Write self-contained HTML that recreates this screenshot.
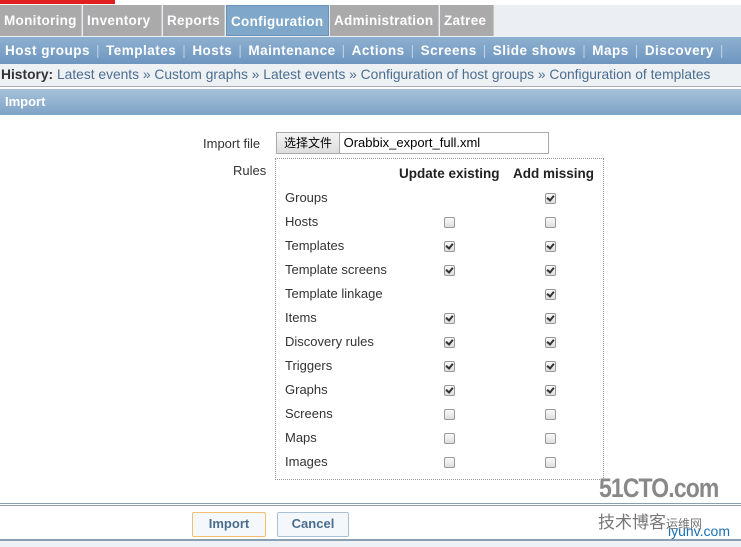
<!DOCTYPE html><html><head><style>
body{margin:0;width:741px;height:547px;background:#fff;font-family:"Liberation Sans",Arial,sans-serif;position:relative;overflow:hidden}
.a{position:absolute}
.tab{position:absolute;top:5px;height:31px;background:#aaa;border-right:1px solid #c4c4c4;color:#fff;font-weight:bold;font-size:13.5px;line-height:31px;padding-left:4px;box-sizing:border-box;white-space:nowrap;overflow:hidden;letter-spacing:0.3px}
.nav{font-weight:bold;color:#fff;font-size:13.5px;letter-spacing:0.5px}
.nav span{color:#bcd0e2;font-weight:normal;margin:0 6px}
.t{font-size:13px;color:#333;position:absolute}
.cb{position:absolute;width:9px;height:9px;border:1px solid #999;border-radius:2px;background:linear-gradient(#fafafa,#ddd)}
.cb.c::after{content:"";position:absolute;left:2px;top:0px;width:3px;height:5px;border:solid #333;border-width:0 2px 2px 0;transform:rotate(40deg)}
.btn{position:absolute;top:512px;height:23px;border:1px solid #aac0d4;border-radius:2px;background:#f5f8fb;color:#4a6d8f;font-weight:bold;font-size:13px;text-align:center;line-height:22px}
</style></head><body>
<div class="a" style="left:0;top:0;width:115px;height:4px;background:#e02020"></div>
<div class="a" style="left:0;top:5px;width:741px;height:32px;background:#ebeef2"></div>
<div class="tab" style="left:0;width:82px">Monitoring</div>
<div class="tab" style="left:83px;width:79px">Inventory</div>
<div class="tab" style="left:163px;width:62px">Reports</div>
<div class="tab" style="left:226px;width:103px;background:#7ea7c9;border:1px solid #6a92b8">Configuration</div>
<div class="tab" style="left:330px;width:109px">Administration</div>
<div class="tab" style="left:440px;width:54px">Zatree</div>
<div class="a nav" style="left:0;top:37px;width:741px;height:27px;line-height:27px;background:linear-gradient(#8fb1d0,#6d96bf);padding-left:5px;box-sizing:border-box;white-space:nowrap">Host groups<span>|</span>Templates<span>|</span>Hosts<span>|</span>Maintenance<span>|</span>Actions<span>|</span>Screens<span>|</span>Slide shows<span>|</span>Maps<span>|</span>Discovery<span>|</span></div>
<div class="a" style="left:0;top:64px;width:741px;height:22px;background:#eef1f4;border-bottom:1px solid #aab;font-size:13.8px;line-height:22px;color:#4a6d8f;white-space:nowrap"><b style="color:#333;padding-left:1px">History:</b> Latest events » Custom graphs » Latest events » Configuration of host groups » Configuration of templates</div>
<div class="a" style="left:0;top:89px;width:741px;height:26px;background:linear-gradient(#a6c1da,#7ea3c6);color:#fff;font-weight:bold;font-size:13px;line-height:26px;padding-left:5px;box-sizing:border-box">Import</div>
<div class="t" style="left:203px;top:136px">Import file</div>
<div class="a" style="left:276px;top:132px;width:271px;height:20px;border:1px solid #aaa;font-size:13px;line-height:20px"><span style="display:inline-block;width:62px;background:linear-gradient(#f4f4f4,#ddd);border-right:1px solid #aaa;text-align:center;font-family:'Noto Sans CJK SC',sans-serif;font-size:12px">选择文件</span> Orabbix_export_full.xml</div>
<div class="t" style="left:233px;top:163px">Rules</div>
<div class="a" style="left:275px;top:158px;width:327px;height:320px;border:1px dotted #999"></div>
<div class="a" style="left:399px;top:166px;font-weight:bold;font-size:13.5px;color:#222">Update existing</div>
<div class="a" style="left:513px;top:166px;font-weight:bold;font-size:13.5px;color:#222">Add missing</div>
<div class="t" style="left:285px;top:190px">Groups</div><div class="cb c" style="left:545px;top:193px"></div>
<div class="t" style="left:285px;top:214px">Hosts</div><div class="cb" style="left:444px;top:217px"></div><div class="cb" style="left:545px;top:217px"></div>
<div class="t" style="left:285px;top:238px">Templates</div><div class="cb c" style="left:444px;top:241px"></div><div class="cb c" style="left:545px;top:241px"></div>
<div class="t" style="left:285px;top:262px">Template screens</div><div class="cb c" style="left:444px;top:265px"></div><div class="cb c" style="left:545px;top:265px"></div>
<div class="t" style="left:285px;top:286px">Template linkage</div><div class="cb c" style="left:545px;top:289px"></div>
<div class="t" style="left:285px;top:310px">Items</div><div class="cb c" style="left:444px;top:313px"></div><div class="cb c" style="left:545px;top:313px"></div>
<div class="t" style="left:285px;top:334px">Discovery rules</div><div class="cb c" style="left:444px;top:337px"></div><div class="cb c" style="left:545px;top:337px"></div>
<div class="t" style="left:285px;top:358px">Triggers</div><div class="cb c" style="left:444px;top:361px"></div><div class="cb c" style="left:545px;top:361px"></div>
<div class="t" style="left:285px;top:382px">Graphs</div><div class="cb c" style="left:444px;top:385px"></div><div class="cb c" style="left:545px;top:385px"></div>
<div class="t" style="left:285px;top:406px">Screens</div><div class="cb" style="left:444px;top:409px"></div><div class="cb" style="left:545px;top:409px"></div>
<div class="t" style="left:285px;top:430px">Maps</div><div class="cb" style="left:444px;top:433px"></div><div class="cb" style="left:545px;top:433px"></div>
<div class="t" style="left:285px;top:454px">Images</div><div class="cb" style="left:444px;top:457px"></div><div class="cb" style="left:545px;top:457px"></div>
<div class="a" style="left:0;top:503px;width:741px;height:38px;border-top:3px double #8a9fb2;border-bottom:2px solid #8a9fb2;background:#fff;box-sizing:border-box"></div>
<div class="a" style="left:0;top:541px;width:741px;height:6px;background:#eef2f6"></div>
<div class="btn" style="left:192px;width:72px;border-color:#f0c070">Import</div>
<div class="btn" style="left:277px;width:70px">Cancel</div>
<div class="a" style="left:599px;top:473px;font-size:27px;font-weight:bold;color:#888;letter-spacing:-1px;transform:scaleX(0.85);transform-origin:left">51CTO.com</div>
<div class="a" style="left:598px;top:508px;font-size:17px;color:#777;font-family:'Noto Sans CJK SC',sans-serif">技术博客<span style="font-size:12px">运维网</span></div>
<div class="a" style="left:668px;top:523px;font-size:14px;color:#1a6fb0">iyunv.com</div>
</body></html>
